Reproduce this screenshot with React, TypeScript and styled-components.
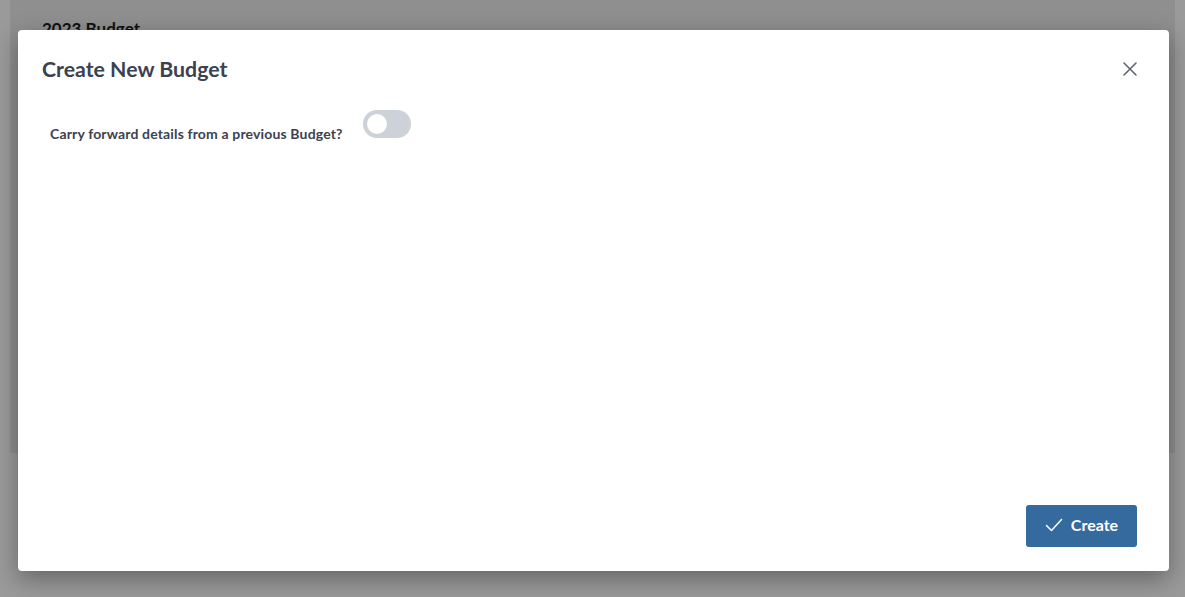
import styled, { createGlobalStyle } from "styled-components";

const GlobalStyle = createGlobalStyle`
    html, body {
        margin: 0;
        padding: 0;
        height: 100%;
    }
    body {
        font-family: Lato, "Liberation Sans", sans-serif;
        background: #9a9a9a;
        overflow: hidden;
    }
`;

const App = () => {
    return (
        <>
            <GlobalStyle />
            <Page>
                <BackPanel>
                    <BackTitle>2023 Budget</BackTitle>
                </BackPanel>
                <Overlay>
                    <Modal>
                        <Header>
                            <Title>Create New Budget</Title>
                            <CloseButton aria-label="Close">
                                <svg width="16" height="16" viewBox="0 0 16 16">
                                    <path d="M2 2 L14 14 M14 2 L2 14" stroke="#5f6470" strokeWidth="1.6" strokeLinecap="round" />
                                </svg>
                            </CloseButton>
                        </Header>
                        <Body>
                            <FieldRow>
                                <Label>Carry forward details from a previous Budget?</Label>
                                <Toggle>
                                    <Knob />
                                </Toggle>
                            </FieldRow>
                        </Body>
                        <Footer>
                            <PrimaryButton>
                                <svg width="18" height="14" viewBox="0 0 18 14">
                                    <path d="M1.5 7.5 L6.5 12.5 L16.5 1.5" fill="none" stroke="#fff" strokeWidth="1.5" strokeLinecap="round" strokeLinejoin="round" />
                                </svg>
                                Create
                            </PrimaryButton>
                        </Footer>
                    </Modal>
                </Overlay>
            </Page>
        </>
    );
};

export default App;

const Page = styled.div`
    position: relative;
    width: 1185px;
    height: 597px;
    padding: 0 10px;
    box-sizing: border-box;
`;

const BackPanel = styled.div`
    height: 453px;
    background: #8f8f8f;
    padding: 18px 32px;
    box-sizing: border-box;
`;

const BackTitle = styled.div`
    font-size: 17px;
    font-weight: 700;
    color: #111;
`;

const Overlay = styled.div`
    position: absolute;
    inset: 0;
    padding: 30px 16px 26px 18px;
    box-sizing: border-box;
    display: flex;
`;

const Modal = styled.div`
    flex: 1;
    background: #fff;
    border-radius: 4px;
    box-shadow: 0 8px 24px rgba(0, 0, 0, 0.35);
    display: flex;
    flex-direction: column;
    padding: 24px 32px 24px 24px;
    box-sizing: border-box;
`;

const Header = styled.div`
    display: flex;
    align-items: center;
    justify-content: space-between;
    height: 30px;
`;

const Title = styled.h2`
    margin: 0;
    font-size: 21.3px;
    font-weight: 700;
    color: #3c4150;
`;

const CloseButton = styled.button`
    border: none;
    background: none;
    padding: 0;
    margin-right: -1px;
    display: flex;
    cursor: pointer;
`;

const Body = styled.div`
    flex: 1;
    padding: 26px 8px 0;
`;

const FieldRow = styled.div`
    display: flex;
    align-items: flex-start;
    gap: 20px;
`;

const Label = styled.label`
    font-size: 14px;
    letter-spacing: 0.15px;
    font-weight: 700;
    color: #3c4150;
    margin-top: 15px;
`;

const Toggle = styled.div`
    width: 48px;
    height: 28px;
    border-radius: 14px;
    background: #cdd1d8;
    display: flex;
    align-items: center;
    padding: 0 4px;
    box-sizing: border-box;
`;

const Knob = styled.div`
    width: 20px;
    height: 20px;
    border-radius: 50%;
    background: #fff;
`;

const Footer = styled.div`
    display: flex;
    justify-content: flex-end;
`;

const PrimaryButton = styled.button`
    height: 42px;
    width: 111px;
    border: none;
    border-radius: 3px;
    background: #356a9f;
    color: #fff;
    font-family: Lato, "Liberation Sans", sans-serif;
    font-size: 16px;
    font-weight: 700;
    display: flex;
    align-items: center;
    justify-content: center;
    gap: 8px;
    padding: 0 0 3px;
    cursor: pointer;
`;
